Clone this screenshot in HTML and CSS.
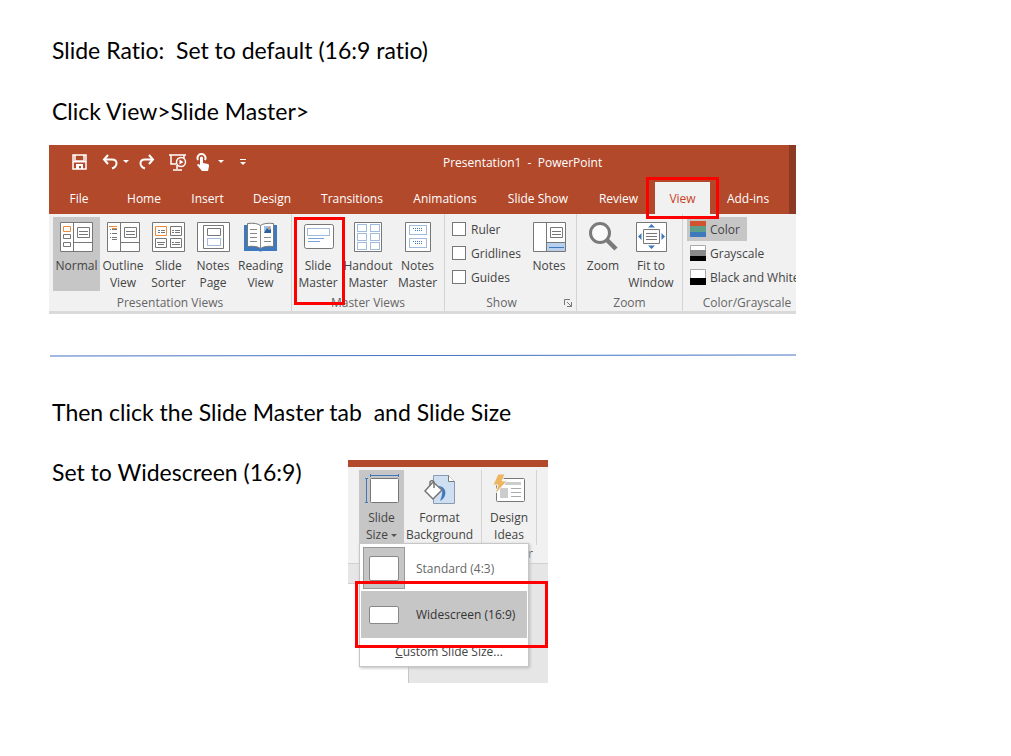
FILE: index.html
```html
<!DOCTYPE html>
<html lang="en">
  <head>
    <meta charset="UTF-8" />
    <meta name="viewport" content="width=device-width, initial-scale=1.0" />
    <title>Slide Ratio</title>
    <link rel="stylesheet" href="styles.css">
  </head>
  <body>
    <main>
      <p class="step">Slide Ratio:&nbsp; Set to default (16:9 ratio)</p>
      <p class="step">Click View&gt;Slide Master&gt;</p>

      <section class="ribbon">
        <header>
          <div class="titlebar">
            <div class="quick">
              <button aria-label="Save">
                <svg width="15" height="16" viewBox="0 0 15 16"><path d="M1 1h13v14H1zM3 1v6h9V1" fill="none" stroke="#fff" stroke-width="1.500"/><path d="M1 7h13v1.500H1zM4 10h7v5H9v-3H7v3H4z" fill="#fff"/></svg>
              </button>
              <button aria-label="Undo">
                <svg width="16" height="16" viewBox="0 0 16 16"><path d="M6 1L2 5.500l4 4.500M2 5.500h8c6 0 6 7 0 9" fill="none" stroke="#fff" stroke-width="2"/></svg>
              </button>
              <button aria-label="Undo list">
                <svg width="6" height="16" viewBox="0 0 6 16"><path d="M0 6h6L3 9z" fill="#fff"/></svg>
              </button>
              <button aria-label="Redo">
                <svg width="16" height="16" viewBox="0 0 16 16"><path d="M10 1l4 4.500L10 10M14 5.500H6c-6 0-6 7 0 9" fill="none" stroke="#fff" stroke-width="2"/></svg>
              </button>
              <button aria-label="Start slide show">
                <svg width="18" height="18" viewBox="0 0 18 18"><path d="M0 2h17M2 2v9h5M8 12v4M4 17h9M15 2v3" fill="none" stroke="#fff" stroke-width="1.500"/><circle cx="12" cy="9" r="4.500" fill="#b7472a" stroke="#fff" stroke-width="1.500"/><path d="M10.500 6.500v5l4-2.500z" fill="#fff"/></svg>
              </button>
              <button aria-label="Touch mode">
                <svg width="14" height="18" viewBox="0 0 14 18"><path d="M2 7a4 4 0 1 1 7 0" fill="none" stroke="#fff" stroke-width="2"/><path d="M4 5a1.500 1.500 0 0 1 3 0v5l5 1q1 0 1 2l-1 5H6l-5-6q1-2 3 0z" fill="#fff"/></svg>
              </button>
              <button aria-label="Touch mode list">
                <svg width="6" height="16" viewBox="0 0 6 16"><path d="M0 6h6L3 9z" fill="#fff"/></svg>
              </button>
              <button aria-label="Customize toolbar">
                <svg width="6" height="16" viewBox="0 0 6 16"><path d="M0 5h6v1H0zM0 8h6l-3 3z" fill="#fff"/></svg>
              </button>
            </div>
            <span class="doc">Presentation1&nbsp; -&nbsp; PowerPoint</span>
          </div>
          <nav class="tabs">
            <button>File</button>
            <button>Home</button>
            <button>Insert</button>
            <button>Design</button>
            <button>Transitions</button>
            <button>Animations</button>
            <button>Slide Show</button>
            <button>Review</button>
            <button class="active marked">View</button>
            <button>Add-ins</button>
          </nav>
        </header>

        <div class="groups">
          <div class="group">
            <div class="tools views">
              <button class="tool on">
                <svg width="33" height="30" viewBox="0 0 33 30"><g fill="#fff" stroke="#777"><path d="M.5.500h32v29H.5z"/><path d="M13.500.500v29M13.500 20.500h19M17.500 5.500h12v10h-12zM19 9.500h9M19 12.500h9M3.500 12.500h7v4h-7zM3.500 20.500h7v4h-7z"/><path d="M3.500 4.500h7v5h-7z" stroke="#ed8b3b"/></g></svg>
                <span>Normal</span>
              </button>
              <button class="tool">
                <svg width="33" height="30" viewBox="0 0 33 30"><g fill="#fff" stroke="#777"><path d="M.5.500h32v29H.5z"/><path d="M13.500.500v29M13.500 20.500h19M17.500 5.500h12v10h-12zM19 9.500h9M19 12.500h9"/><path d="M3 7.500h1M5 7.500h5M3 11.500h1M5 11.500h5M3 15.500h1M5 15.500h5M5 17.500h5"/><path d="M2 4.500h8M5 6.500h5" stroke="#ed8b3b"/></g></svg>
                <span>Outline<br>View</span>
              </button>
              <button class="tool">
                <svg width="33" height="30" viewBox="0 0 33 30"><g fill="#fff" stroke="#777"><path d="M.5.500h32v29H.5z"/><path d="M18.500 4.500h11v9h-11zM3.500 16.500h11v9h-11zM18.500 16.500h11v9h-11zM20 8.500h2M23 8.500h5M20 10.500h2M23 10.500h5M5 20.500h8M6 22.500h6M20 20.500h2M23 20.500h5M20 22.500h8"/><path d="M3.500 4.500h11v9h-11z" stroke="#ed8b3b"/><path d="M6 8.500h2M9 8.500h4M6 10.500h2M9 10.500h4"/></g></svg>
                <span>Slide<br>Sorter</span>
              </button>
              <button class="tool">
                <svg width="33" height="30" viewBox="0 0 33 30"><g fill="#fff" stroke="#777"><path d="M.5.500h32v29H.5z"/><path d="M6.500 3.500h20v23h-20zM10.500 6.500h13v7h-13z"/><path d="M10.500 16.500h13v7h-13z" stroke="#3f79bd" stroke-dasharray="1 1"/></g></svg>
                <span>Notes<br>Page</span>
              </button>
              <button class="tool">
                <svg width="33" height="30" viewBox="0 0 33 30"><path d="M0 3h33v26H18q-1.500 1-3 0H0z" fill="#3f79bd"/><path d="M3.500 1.500q9-1 13 2 4-3 13-2v23q-9-1-13 2-4-3-13-2z" fill="#fff" stroke="#777"/><path d="M16.500 4v22M6 7.500h7M6 11.500h7M6 15.500h7M6 19.500h7M20 15.500h7M20 19.500h7" stroke="#888"/><path d="M20 4h7v7h-7z" fill="#9fc1e6"/><path d="M20 11l3-5 2 2 2-1v4z" fill="#2b5f9e"/><circle cx="25" cy="6" r="1" fill="#ed8b3b"/></svg>
                <span>Reading<br>View</span>
              </button>
            </div>
            <h2>Presentation Views</h2>
          </div>

          <div class="group">
            <div class="tools masters">
              <button class="tool marked">
                <svg width="33" height="30" viewBox="0 0 33 30"><rect x="2.500" y="2.500" width="29" height="24" rx="2" fill="#fff" stroke="#777"/><path d="M5.500 6.500h22v7h-22z" fill="none" stroke="#3f79bd" stroke-dasharray="1 1"/><path d="M6 16.500h16M6 19.500h12" stroke="#78a5d8"/></svg>
                <span>Slide<br>Master</span>
              </button>
              <button class="tool">
                <svg width="28" height="30" viewBox="0 0 28 30"><path d="M.5.500h27v29H.5z" fill="#fff" stroke="#777"/><path d="M3.500 2.500h9v7h-9zM3.500 11.500h9v7h-9zM3.500 20.500h9v7h-9zM16.500 2.500h9v7h-9zM16.500 11.500h9v7h-9zM16.500 20.500h9v7h-9z" fill="none" stroke="#3f79bd" stroke-dasharray="1 1"/></svg>
                <span>Handout<br>Master</span>
              </button>
              <button class="tool">
                <svg width="26" height="30" viewBox="0 0 26 30"><path d="M.5.500h25v29H.5z" fill="#fff" stroke="#777"/><path d="M4.500 3.500h17v9h-17zM4.500 16.500h17v9h-17zM8 6.500h10M10 8.500h7M8 19.500h10M10 21.500h7" fill="none" stroke="#3f79bd" stroke-dasharray="1 1"/></svg>
                <span>Notes<br>Master</span>
              </button>
            </div>
            <h2>Master Views</h2>
          </div>

          <div class="group with-launcher">
            <div class="tools show">
              <div class="checks">
                <label><input type="checkbox">Ruler</label>
                <label><input type="checkbox">Gridlines</label>
                <label><input type="checkbox">Guides</label>
              </div>
              <button class="tool">
                <svg width="33" height="30" viewBox="0 0 33 30"><path d="M.5.500h32v29H.5z" fill="#fff" stroke="#777"/><path d="M14 20h18v9H14z" fill="#b9d0ec"/><path d="M13.500.500v29M13.500 20.500h19M17.500 5.500h12v10h-12zM19 9.500h9M19 12.500h9" fill="none" stroke="#777"/><path d="M16 25.500h15" stroke="#3f79bd"/></svg>
                <span>Notes</span>
              </button>
            </div>
            <h2>Show</h2>
            <button class="launcher" aria-label="Grid settings">
              <svg width="8" height="8" viewBox="0 0 8 8"><path d="M.5 6V.500H6M3 3l4 4M7.500 3v4.500H3" fill="none" stroke="#777"/></svg>
            </button>
          </div>

          <div class="group">
            <div class="tools zooms">
              <button class="tool">
                <svg width="30" height="30" viewBox="0 0 30 30"><circle cx="12" cy="11" r="9.500" fill="#fafafa" stroke="#7a7a7a" stroke-width="3"/><path d="M19 18l9 9" stroke="#7a7a7a" stroke-width="4.500"/></svg>
                <span>Zoom</span>
              </button>
              <button class="tool">
                <svg width="31" height="30" viewBox="0 0 31 30"><path d="M.5.500h30v29H.5zM7.500 7.500h16v14h-16zM10 11.500h11M10 14.500h11M10 17.500h11" fill="#fff" stroke="#777"/><path d="M15.500 2l3.500 3.500h-7zM15.500 27l3.500-3.500h-7zM2 14.500L5.500 11v7zM29 14.500L25.500 11v7z" fill="#3f79bd"/></svg>
                <span>Fit to<br>Window</span>
              </button>
            </div>
            <h2>Zoom</h2>
          </div>

          <div class="group">
            <div class="tools colors">
              <button class="on">
                <svg width="16" height="16" viewBox="0 0 16 16"><path d="M0 0h16v5H0z" fill="#d35230"/><path d="M0 5h16v6H0z" fill="#5f9f8a"/><path d="M0 11h16v5H0z" fill="#3f79bd"/></svg>
                Color
              </button>
              <button>
                <svg width="16" height="16" viewBox="0 0 16 16"><path d="M.5.500h15v15H.5z" fill="#fff" stroke="#aaa"/><path d="M0 5h16v6H0z" fill="#8a8a8a"/><path d="M0 11h16v5H0z" fill="#000"/></svg>
                Grayscale
              </button>
              <button>
                <svg width="16" height="16" viewBox="0 0 16 16"><path d="M.5.500h15v15H.5z" fill="#fff" stroke="#aaa"/><path d="M0 9h16v7H0z" fill="#000"/></svg>
                Black and White
              </button>
            </div>
            <h2>Color/Grayscale</h2>
          </div>
        </div>
      </section>

      <svg class="rule" viewBox="0 0 747 3" preserveAspectRatio="none"><path d="M1 2l746-1" stroke="#4472c4"/></svg>

      <p class="step">Then click the Slide Master tab&nbsp; and Slide Size</p>

      <div class="last">
        <p class="step">Set to Widescreen (16:9)</p>

        <section class="size-panel">
          <div class="size-tools">
            <button class="tool on">
              <svg width="36" height="30" viewBox="0 0 36 30"><rect x="6.500" y="4.500" width="28" height="24" rx="1" fill="#fff" stroke="#777"/><path d="M6 1.500h29M6.500 0v3M34.500 0v3M2.500 4v25M1 4.500h3M1 28.500h3" fill="none" stroke="#3f79bd"/></svg>
              <span>Slide<br>Size <i class="caret"></i></span>
            </button>
            <button class="tool">
              <svg width="34" height="30" viewBox="0 0 34 30"><path d="M10.500 1.500h15l6 6v22h-21z" fill="#cfdff2" stroke="#8a9bb0"/><path d="M25.500 1.500v6h6" fill="#fff" stroke="#777"/><path d="M12 12c8 0 9 6 5 15 8-4 7-15-2-15z" fill="#3f79bd"/><path d="M10 8l9 8-9 9-8-8z" fill="#fff" stroke="#777" stroke-width="1.500"/><path d="M7 12V8q2-3 4 0v6" fill="none" stroke="#777" stroke-width="1.500"/></svg>
              <span>Format<br>Background</span>
            </button>
            <button class="tool">
              <svg width="32" height="30" viewBox="0 0 32 30"><rect x="3.500" y="4.500" width="28" height="23" rx="1" fill="#fff" stroke="#777"/><path d="M12 8h16v3H12zM7 14h8v10H7z" fill="#ccc"/><path d="M18 14.500h10M18 18.500h10M18 22.500h10" stroke="#aaa"/><path d="M5 0h7L9 7h5L2 20l3-9H0z" fill="#edb55e" stroke="#f0f0f0"/></svg>
              <span>Design<br>Ideas</span>
            </button>
            <span class="cut">r</span>
          </div>
          <div class="workspace">
            <div class="thumbs"></div>
          </div>

          <div class="menu">
            <button class="item">
              <span class="thumb picked"><i class="standard"></i></span>
              Standard (4:3)
            </button>
            <button class="item hover">
              <span class="thumb"><i class="wide"></i></span>
              Widescreen (16:9)
            </button>
            <button class="custom"><u>C</u>ustom Slide Size...</button>
          </div>
        </section>
      </div>
    </main>
  </body>
</html>
```
FILE: styles.css
```css
* {
  box-sizing: border-box;
}
body {
  margin: 0;
  background: white;
  color: #444;
  font-family: "Open Sans", "Noto Sans", sans-serif;
  font-size: 12px;
}
main {
  max-width: 845px;
  padding: 38px 49px;
}
button {
  padding: 0;
  border: 0;
  background: none;
  color: inherit;
  font: inherit;
  cursor: pointer;
}
svg {
  display: block;
  flex: none;
}
.step {
  margin: 0 0 37px 3px;
  color: black;
  font-family: Lato, "Open Sans", sans-serif;
  font-size: 23px;
  font-variant-ligatures: none;
  line-height: 24px;
  white-space: nowrap;
}
.ribbon {
  margin-top: -15px;
  overflow: hidden;
  background: #f1f1f1;
  border-bottom: 3px solid #dadada;
}
.ribbon header {
  background: #b2492b;
  border-right: 7px solid #8c3a24;
  color: white;
}
.titlebar {
  display: flex;
  align-items: center;
  height: 37px;
  padding: 0 0 3px 23px;
}
.quick {
  display: grid;
  grid-template-columns: 30px 21px 16px 30px 27px 22px 22px 20px;
  align-items: center;
  width: 371px;
}
.quick button {
  justify-self: start;
}
.tabs {
  display: grid;
  grid-template-columns: 60px 70px 57px 72px 88px 98px 88px 73px 55px 76px;
  height: 32px;
}
.tabs .active {
  background: #f1f1f1;
  color: #c8421f;
}
.marked {
  position: relative;
}
.marked::after {
  content: "";
  position: absolute;
  z-index: 1;
  border: 3px solid #ff0000;
}
.tabs .marked::after {
  inset: -5px -9px;
}
.groups {
  display: grid;
  grid-template-columns: 243px 153px 132px 106px minmax(128px, 1fr);
  height: 97px;
}
.group {
  position: relative;
  min-width: 0;
  padding-top: 3px;
  border-right: 1px solid #d4d4d4;
}
.group:last-child {
  border-right: 0;
}
.group h2 {
  margin: 4px 0 0;
  color: #666;
  font-size: 12px;
  font-weight: normal;
  line-height: 17px;
  text-align: center;
  white-space: nowrap;
}
.with-launcher h2 {
  padding-right: 18px;
}
.tools {
  display: grid;
  height: 73px;
}
.views {
  grid-template-columns: 47px 46px 45px 44px 51px;
  padding-left: 4px;
}
.masters {
  grid-template-columns: 50px 50px 49px;
  padding-left: 1px;
}
.masters .marked::after {
  inset: 0 -2px -14px 1px;
}
.show {
  grid-template-columns: 75px 44px;
  padding-left: 7px;
}
.zooms {
  grid-template-columns: 48px 48px;
  padding-left: 2px;
}
.tool {
  display: flex;
  flex-direction: column;
  align-items: center;
  min-width: 0;
  padding-top: 5px;
  line-height: 17px;
  white-space: nowrap;
}
.tool span {
  margin-top: 5px;
}
.on {
  background: #c6c6c6;
}
.checks label {
  display: flex;
  align-items: center;
  gap: 5px;
  height: 24px;
}
.checks input {
  appearance: none;
  width: 14px;
  height: 14px;
  margin: 0;
  border: 1px solid #777;
  background: white;
}
.launcher {
  position: absolute;
  right: 4px;
  bottom: 4px;
}
.colors {
  justify-items: start;
  grid-template-rows: repeat(3, 24px);
  padding-left: 4px;
}
.colors button {
  display: flex;
  align-items: center;
  gap: 4px;
  padding: 0 7px 0 3px;
  white-space: nowrap;
}
.rule {
  width: 100%;
  height: 3px;
  margin: 40px 0 43px;
}
.last {
  display: flex;
  align-items: flex-start;
  gap: 42px;
  margin-top: -1px;
}
.last .step {
  width: 254px;
}
.size-panel {
  position: relative;
  width: 200px;
  border-top: 7px solid #b2492b;
}
.size-tools {
  display: grid;
  grid-template-columns: 45px 77px 56px;
  height: 97px;
  padding: 3px 10px 0 11px;
  background: #f1f1f1;
  border-bottom: 1px solid #d0d0d0;
}
.size-tools .tool {
  padding-top: 4px;
}
.size-tools .tool:nth-child(2) {
  padding-right: 6px;
}
.size-tools .tool:nth-child(3) {
  border-left: 1px solid #d4d4d4;
  border-right: 1px solid #d4d4d4;
}
.caret {
  display: inline-block;
  border: 3px solid transparent;
  border-top-color: #555;
  border-bottom: 0;
  vertical-align: middle;
}
.cut {
  grid-column: 3;
  padding-right: 4px;
  text-align: right;
}
.workspace {
  height: 119px;
  padding-top: 19px;
  background: #e6e6e6;
}
.thumbs {
  width: 61px;
  height: 100px;
  background: white;
  border-top: 1px solid #d0d0d0;
  border-right: 1px solid #c6c6c6;
}
.menu {
  position: absolute;
  top: 76px;
  left: 11px;
  width: 170px;
  padding: 1px;
  background: white;
  border: 1px solid #c6c6c6;
  box-shadow: 1px 1px 3px #bbb;
}
.item {
  display: flex;
  align-items: center;
  gap: 11px;
  width: 100%;
  height: 46px;
  padding-left: 2px;
  color: #666;
  white-space: nowrap;
}
.hover {
  position: relative;
  height: 47px;
  background: #c6c6c6;
  color: #333;
}
.hover::after {
  content: "";
  position: absolute;
  inset: -10px -21px -10px -6px;
  border: 3px solid #ff0000;
}
.thumb {
  display: grid;
  place-items: center;
  width: 42px;
  height: 42px;
}
.picked {
  background: #c6c6c6;
  border: 1px solid #999;
}
.thumb i {
  width: 30px;
  background: white;
  border: 1px solid #888;
  border-radius: 2px;
}
.standard {
  height: 25px;
}
.wide {
  height: 18px;
}
.custom {
  display: block;
  width: 100%;
  height: 27px;
  padding-left: 10px;
}
```
